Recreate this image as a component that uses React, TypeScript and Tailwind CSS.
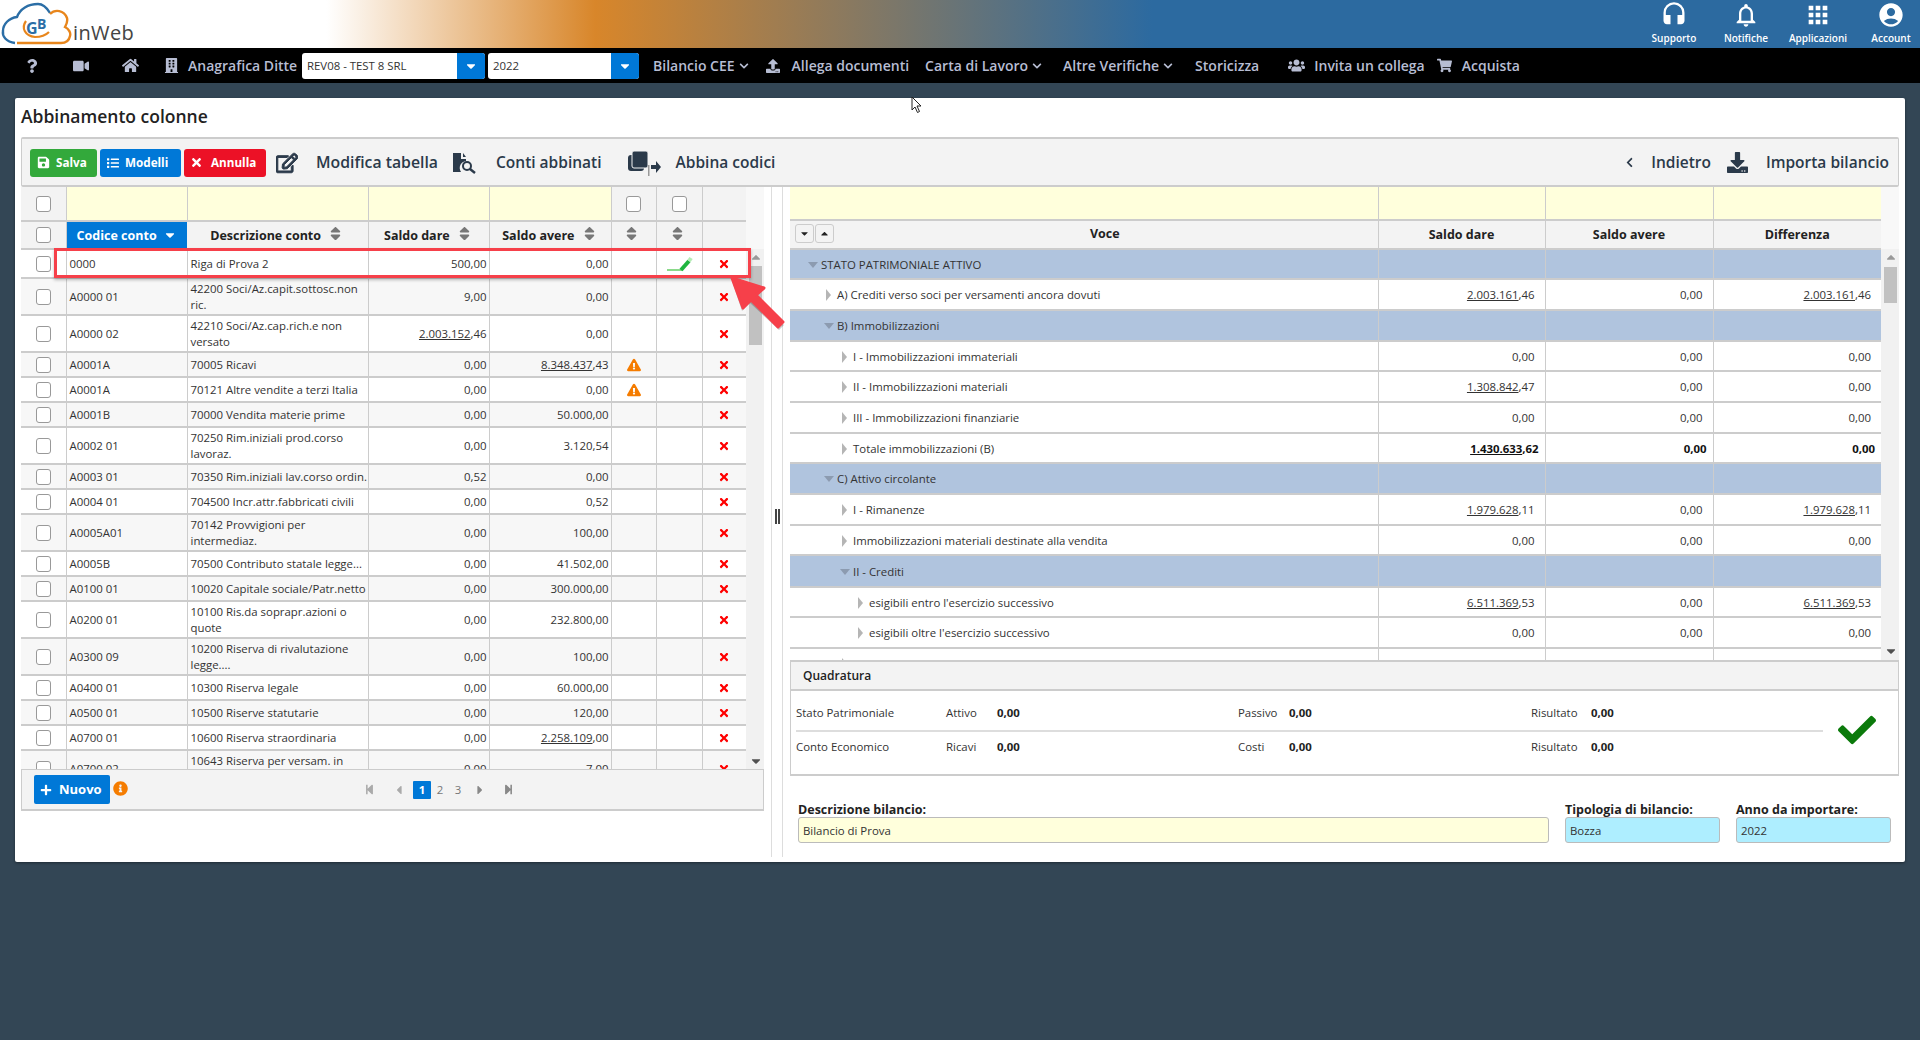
import React from "react";
import {
  FaSave, FaList, FaTimes, FaRegEdit, FaQuestion, FaVideo, FaHome, FaBuilding, FaUpload,
  FaChevronDown, FaChevronLeft, FaUsers, FaShoppingCart, FaCheck, FaCaretDown, FaCaretUp, FaSort,
  FaExclamationTriangle, FaPlus, FaInfoCircle, FaStepBackward, FaStepForward, FaCaretLeft, FaCaretRight, FaDownload,
} from "react-icons/fa";
import { MdHeadset, MdNotificationsNone, MdApps, MdAccountCircle } from "react-icons/md";

const Box = () => <span className="block h-4 w-[15px] rounded-[3px] border border-[#999] bg-white mx-auto" />;

const Sort = ({ solo }: { solo?: boolean }) => (
  <FaSort className={(solo ? "mr-[4px] " : "ml-[3px] ") + "inline-block text-[#777] text-[17px] align-[-2px]"} />
);

const Num = ({ u, r }: { u: string; r: string }) => (
  <span>
    <span className="underline">{u}</span>
    {r}
  </span>
);

const parseNum = (v: string) => {
  if (v.startsWith("_")) {
    const [a, b] = v.slice(1).split(",");
    return <Num u={a} r={"," + b} />;
  }
  return v;
};

const leftRows: { c: string; d: React.ReactNode; a: string; b: string; h: string; w?: boolean; p?: boolean }[] = [
  { c: "0000", d: "Riga di Prova 2", a: "500,00", b: "0,00", h: "h-[29px]", p: true },
  { c: "A0000 01", d: <>42200 Soci/Az.capit.sottosc.non<br />ric.</>, a: "9,00", b: "0,00", h: "h-[37px]" },
  { c: "A0000 02", d: <>42210 Soci/Az.cap.rich.e non<br />versato</>, a: "_2.003.152,46", b: "0,00", h: "h-[37px]" },
  { c: "A0001A", d: "70005 Ricavi", a: "0,00", b: "_8.348.437,43", h: "h-[25px]", w: true },
  { c: "A0001A", d: "70121 Altre vendite a terzi Italia", a: "0,00", b: "0,00", h: "h-[25px]", w: true },
  { c: "A0001B", d: "70000 Vendita materie prime", a: "0,00", b: "50.000,00", h: "h-[25px]" },
  { c: "A0002 01", d: <>70250 Rim.iniziali prod.corso<br />lavoraz.</>, a: "0,00", b: "3.120,54", h: "h-[37px]" },
  { c: "A0003 01", d: "70350 Rim.iniziali lav.corso ordin.", a: "0,52", b: "0,00", h: "h-[25px]" },
  { c: "A0004 01", d: "704500 Incr.attr.fabbricati civili", a: "0,00", b: "0,52", h: "h-[25px]" },
  { c: "A0005A01", d: <>70142 Provvigioni per<br />intermediaz.</>, a: "0,00", b: "100,00", h: "h-[37px]" },
  { c: "A0005B", d: "70500 Contributo statale legge...", a: "0,00", b: "41.502,00", h: "h-[25px]" },
  { c: "A0100 01", d: "10020 Capitale sociale/Patr.netto", a: "0,00", b: "300.000,00", h: "h-[25px]" },
  { c: "A0200 01", d: <>10100 Ris.da soprapr.azioni o<br />quote</>, a: "0,00", b: "232.800,00", h: "h-[37px]" },
  { c: "A0300 09", d: <>10200 Riserva di rivalutazione<br />legge....</>, a: "0,00", b: "100,00", h: "h-[37px]" },
  { c: "A0400 01", d: "10300 Riserva legale", a: "0,00", b: "60.000,00", h: "h-[25px]" },
  { c: "A0500 01", d: "10500 Riserve statutarie", a: "0,00", b: "120,00", h: "h-[25px]" },
  { c: "A0700 01", d: "10600 Riserva straordinaria", a: "0,00", b: "_2.258.109,00", h: "h-[25px]" },
  { c: "A0700 02", d: <>10643 Riserva per versam. in<br />c/capitale</>, a: "0,00", b: "7,00", h: "h-[37px]" },
];

const rightRows: { t: string; l: string; g?: boolean; a: string; b: string; c: string; bold?: boolean; h: string }[] = [
  { t: "STATO PATRIMONIALE ATTIVO", l: "pl-[31px]", g: true, a: "", b: "", c: "", h: "h-[30px]" },
  { t: "A) Crediti verso soci per versamenti ancora dovuti", l: "pl-[47px]", a: "_2.003.161,46", b: "0,00", c: "_2.003.161,46", h: "h-[31px]" },
  { t: "B) Immobilizzazioni", l: "pl-[47px]", g: true, a: "", b: "", c: "", h: "h-[31px]" },
  { t: "I - Immobilizzazioni immateriali", l: "pl-[63px]", a: "0,00", b: "0,00", c: "0,00", h: "h-[30px]" },
  { t: "II - Immobilizzazioni materiali", l: "pl-[63px]", a: "_1.308.842,47", b: "0,00", c: "0,00", h: "h-[31px]" },
  { t: "III - Immobilizzazioni finanziarie", l: "pl-[63px]", a: "0,00", b: "0,00", c: "0,00", h: "h-[31px]" },
  { t: "Totale immobilizzazioni (B)", l: "pl-[63px]", a: "_1.430.633,62", b: "0,00", c: "0,00", bold: true, h: "h-[30px]" },
  { t: "C) Attivo circolante", l: "pl-[47px]", g: true, a: "", b: "", c: "", h: "h-[31px]" },
  { t: "I - Rimanenze", l: "pl-[63px]", a: "_1.979.628,11", b: "0,00", c: "_1.979.628,11", h: "h-[31px]" },
  { t: "Immobilizzazioni materiali destinate alla vendita", l: "pl-[63px]", a: "0,00", b: "0,00", c: "0,00", h: "h-[30px]" },
  { t: "II - Crediti", l: "pl-[63px]", g: true, a: "", b: "", c: "", h: "h-[32px]" },
  { t: "esigibili entro l'esercizio successivo", l: "pl-[79px]", a: "_6.511.369,53", b: "0,00", c: "_6.511.369,53", h: "h-[30px]" },
  { t: "esigibili oltre l'esercizio successivo", l: "pl-[79px]", a: "0,00", b: "0,00", c: "0,00", h: "h-[31px]" },
  { t: "Immobilizzazioni", l: "pl-[63px]", a: "0,00", b: "0,00", c: "0,00", h: "h-[31px]" },
];

const NavText = ({ children, cls }: { children: React.ReactNode; cls: string }) => (
  <span className={"whitespace-nowrap text-[14px] font-semibold " + cls}>{children}</span>
);

const Select = ({ v, cls }: { v: string; cls: string }) => (
  <div className={"flex h-[26px] items-stretch overflow-hidden rounded-[3px] bg-white " + cls}>
    <span className="flex-1 pl-[5px] text-[11.4px] leading-[26px] text-[#333]">{v}</span>
    <span className="flex w-[28px] items-center justify-center bg-[#0078d7] text-white">
      <FaCaretDown className="text-[14px]" />
    </span>
  </div>
);

const TopIcon = ({ icon, label, cls }: { icon: React.ReactNode; label: string; cls: string }) => (
  <div className={"flex flex-col items-center text-white " + cls}>
    <span className="flex h-[26px] items-center text-[28px]">{icon}</span>
    <span className="mt-[3px] whitespace-nowrap text-[10px] font-semibold leading-[14px]">{label}</span>
  </div>
);

const ToolBtn = ({ cls, icon, label }: { cls: string; icon: React.ReactNode; label: string }) => (
  <button className={"flex h-[28px] items-center rounded-[3px] text-[11.7px] font-bold text-white " + cls}>
    {icon}
    {label}
  </button>
);

export default function App() {
  return (
    <div className="relative h-[1040px] w-[1920px] overflow-hidden bg-[#334655] font-['Open_Sans',sans-serif] text-[11.4px] text-[#333]">
      {/* top band */}
      <header className="flex h-12 items-start justify-between bg-[linear-gradient(90deg,#ffffff_17%,#d8862a_31%,#2c6aa0_60%)]">
        <div className="flex items-end">
          <svg viewBox="0 0 72 46" className="h-[46px] w-[72px]">
            <path d="M15 43 C6 42 2 36 3 31 C3 24 9 18 17 17 C20 9 28 4 38 4 C43 4 47 8 50 13" fill="none" stroke="#2b6ea6" strokeWidth="2.4" />
            <path d="M50 14 C55 9 64 10 67 18 C68 22 66 25 65 27 C69 29 71 33 70 36 C69 41 65 43 61 43 L17 43" fill="none" stroke="#e8861c" strokeWidth="2.4" />
            <path d="M26 21 C21 28 25 36 35 37 C41 37 46 35 49 32" fill="none" stroke="#e8861c" strokeWidth="2.2" />
            <text x="26" y="34" fontSize="16" fontWeight="700" fill="#2b6ea6" fontFamily="Open Sans">G</text>
            <text x="37" y="29" fontSize="14" fontWeight="700" fill="#2b6ea6" fontFamily="Open Sans">B</text>
          </svg>
          <span className="ml-[1px] text-[20px] font-normal leading-[27px] tracking-[0.4px] text-[#444]">inWeb</span>
        </div>
        <div className="flex pt-[2px]">
          <TopIcon cls="w-[72px]" icon={<MdHeadset />} label="Supporto" />
          <TopIcon cls="w-[72px]" icon={<MdNotificationsNone />} label="Notifiche" />
          <TopIcon cls="w-[72px] mr-[8px]" icon={<MdApps />} label="Applicazioni" />
          <TopIcon cls="w-[58px]" icon={<MdAccountCircle />} label="Account" />
        </div>
      </header>

      {/* nav */}
      <nav className="flex h-[35px] items-center bg-black text-[#b7bdd3]">
        <FaQuestion className="ml-[25px] text-[14px]" />
        <FaVideo className="ml-[34px] text-[16px]" />
        <FaHome className="ml-[33px] text-[17px]" />
        <FaBuilding className="ml-[25px] text-[15px]" />
        <NavText cls="ml-[9px] w-[114px]">Anagrafica Ditte</NavText>
        <Select v="REV08 - TEST 8 SRL" cls="w-[183px]" />
        <Select v="2022" cls="ml-[3px] w-[151px]" />
        <NavText cls="ml-[14px]">Bilancio CEE</NavText>
        <FaChevronDown className="ml-[4px] text-[10px]" />
        <FaUpload className="ml-[17px] text-[14px]" />
        <NavText cls="ml-[12px]">Allega documenti</NavText>
        <NavText cls="ml-[16px]">Carta di Lavoro</NavText>
        <FaChevronDown className="ml-[4px] text-[10px]" />
        <NavText cls="ml-[21px]">Altre Verifiche</NavText>
        <FaChevronDown className="ml-[4px] text-[10px]" />
        <NavText cls="ml-[22px]">Storicizza</NavText>
        <FaUsers className="ml-[29px] text-[17px]" />
        <NavText cls="ml-[9px]">Invita un collega</NavText>
        <FaShoppingCart className="ml-[12px] text-[15px]" />
        <NavText cls="ml-[10px]">Acquista</NavText>
      </nav>

      {/* card */}
      <main className="mx-[15px] mt-[15px] h-[764px] rounded-[2px] bg-white px-[6px] shadow-[0_1px_3px_rgba(0,0,0,0.4)]">
        <h1 className="flex h-[39px] items-center pb-[2px] text-[17.5px] font-semibold text-[#222]">Abbinamento colonne</h1>

        <div className="flex h-[50px] items-center justify-between rounded-[2px] border-y-2 border-x border-[#ccc] bg-[#f3f3f3] pt-[1px] text-[#2b3a4a]">
          <div className="flex items-center">
            <ToolBtn cls="ml-[8px] w-[67px] bg-[#33a93b] pl-[7px]" icon={<FaSave className="mr-[6px] text-[13px]" />} label="Salva" />
            <ToolBtn cls="ml-[3px] w-[81px] bg-[#0078d7] pl-[7px]" icon={<FaList className="mr-[6px] text-[12px]" />} label="Modelli" />
            <ToolBtn cls="ml-[3px] w-[82px] bg-[#ec1126] pl-[6px]" icon={<FaTimes className="mr-[8px] text-[13px]" />} label="Annulla" />
            <FaRegEdit className="ml-[10px] stroke-[25] text-[22px]" />
            <span className="ml-[18px] text-[15.8px] font-semibold">Modifica tabella</span>
            <svg viewBox="0 0 24 22" className="ml-[14px] h-[22px] w-[24px]" fill="#2b3a4a">
              <path d="M1 1 H9 V7 H14 V9 A7 7 0 0 0 9 20 H1 Z" />
              <path d="M11 1 L14 5 H11 Z" />
              <circle cx="15" cy="14" r="4" fill="none" stroke="#2b3a4a" strokeWidth="2" />
              <path d="M18 17 L23 21" stroke="#2b3a4a" strokeWidth="2.5" />
            </svg>
            <span className="ml-[20px] text-[15.5px] font-semibold">Conti abbinati</span>
            <svg viewBox="0 0 34 26" className="ml-[25px] h-[26px] w-[34px]" fill="#2b3a4a">
              <rect x="1" y="5" width="16" height="16" rx="3" />
              <rect x="5" y="1" width="16" height="17" rx="2" stroke="#f3f3f3" strokeWidth="1" />
              <rect x="21" y="15" width="1.5" height="11" fill="#999" />
              <path d="M24 15 H29 V11 L34 17 L29 23 V19 H24 Z" />
            </svg>
            <span className="ml-[15px] text-[15.5px] font-semibold">Abbina codici</span>
          </div>
          <div className="flex items-center pr-[9px]">
            <FaChevronLeft className="text-[11px]" />
            <span className="ml-[16px] text-[15.5px] font-semibold">Indietro</span>
            <FaDownload className="ml-[16px] text-[21px]" />
            <span className="ml-[18px] text-[15.5px] font-semibold">Importa bilancio</span>
          </div>
        </div>

        <div className="flex">
          {/* left */}
          <section className="w-[743px]">
            <div className="flex h-[582px] overflow-hidden">
              <div className="w-[725px]">
                <table className="w-[725px] table-fixed border-collapse">
                  <colgroup>
                    <col className="w-[45px]" /><col className="w-[121px]" /><col className="w-[181px]" /><col className="w-[121px]" />
                    <col className="w-[122px]" /><col className="w-[45px]" /><col className="w-[46px]" /><col className="w-[44px]" />
                  </colgroup>
                  <thead>
                    <tr className="h-[34px]">
                      <th className="border-b-2 border-r border-[#ccc] bg-[#f3f3f3]"><Box /></th>
                      <th className="border-b-2 border-r border-[#ccc] bg-[#ffffdc]" />
                      <th className="border-b-2 border-r border-[#ccc] bg-[#ffffdc]" />
                      <th className="border-b-2 border-r border-[#ccc] bg-[#ffffdc]" />
                      <th className="border-b-2 border-r border-[#ccc] bg-[#ffffdc]" />
                      <th className="border-b-2 border-r border-[#ccc] bg-[#f3f3f3]"><Box /></th>
                      <th className="border-b-2 border-r border-[#ccc] bg-[#f3f3f3]"><Box /></th>
                      <th className="border-b-2 border-[#ccc] bg-[#f3f3f3]" />
                    </tr>
                    <tr className="h-[28px] text-[12.5px] font-semibold text-[#222]">
                      <th className="border-b-2 border-r border-[#ccc] bg-[#f3f3f3]"><Box /></th>
                      <th className="bg-[#0078d7] pt-[1px] font-bold text-white">Codice conto <FaCaretDown className="ml-[3px] inline-block text-[14px] align-[-2px]" /></th>
                      <th className="border-b-2 border-r border-[#ccc] bg-[#f3f3f3] pt-[1px]">Descrizione conto <Sort /></th>
                      <th className="border-b-2 border-r border-[#ccc] bg-[#f3f3f3] pt-[1px]">Saldo dare <Sort /></th>
                      <th className="border-b-2 border-r border-[#ccc] bg-[#f3f3f3] pt-[1px]">Saldo avere <Sort /></th>
                      <th className="border-b-2 border-r border-[#ccc] bg-[#f3f3f3]"><Sort solo /></th>
                      <th className="border-b-2 border-r border-[#ccc] bg-[#f3f3f3]"><Sort solo /></th>
                      <th className="border-b-2 border-[#ccc] bg-[#f3f3f3]" />
                    </tr>
                  </thead>
                  <tbody>
                    {leftRows.map((r, i) => (
                      <tr key={i} className={r.h + (i % 2 ? " bg-[#f7f7f7]" : " bg-white")}>
                        <td className="border-b-2 border-r border-[#ccc]"><Box /></td>
                        <td className="border-b-2 border-r border-[#ccc] pl-[3px] pt-[1px]">{r.c}</td>
                        <td className="border-b-2 border-r border-[#ccc] pl-[3px] pt-[1px] leading-[16px] whitespace-nowrap overflow-hidden">{r.d}</td>
                        <td className="border-b-2 border-r border-[#ccc] pr-[2px] pt-[1px] text-right">{parseNum(r.a)}</td>
                        <td className="border-b-2 border-r border-[#ccc] pr-[2px] pt-[1px] text-right">{parseNum(r.b)}</td>
                        <td className="border-b-2 border-r border-[#ccc] pl-[15px]">
                          {r.w && <FaExclamationTriangle className="text-[14px] text-[#f57c00]" />}
                        </td>
                        <td className="border-b-2 border-r border-[#ccc] text-center">
                          {r.p && (
                            <svg viewBox="0 0 28 16" className="mx-auto h-[16px] w-[28px]">
                              <path d="M2 14 H17" stroke="#3cc13c" strokeWidth="1.2" />
                              <path d="M16 14 L24 5" stroke="#1fb53f" strokeWidth="4" />
                              <path d="M24 5 L26 2" stroke="#b5ecb5" strokeWidth="4" />
                            </svg>
                          )}
                        </td>
                        <td className="border-b-2 border-[#ccc]"><FaTimes className="mx-auto text-[12px] text-[#f00]" /></td>
                      </tr>
                    ))}
                  </tbody>
                </table>
              </div>
              <div className="flex w-[18px] flex-col">
                <div className="h-[62px] bg-[#f8f8f8]" />
                <div className="flex flex-1 flex-col items-center bg-[#f1f1f1] pl-[1px]">
                  <FaCaretUp className="mt-[1px] h-[14px] text-[10px] text-[#999]" />
                  <div className="mt-[2px] h-[79px] w-[13px] bg-[#c1c1c1]" />
                  <div className="flex-1" />
                  <FaCaretDown className="mb-[1px] h-[14px] text-[10px] text-[#505050]" />
                </div>
              </div>
            </div>
            <footer className="relative flex h-[42px] items-center border-y border-x border-[#ccc] bg-[#f3f3f3] border-b-2">
              <button className="ml-[12px] flex h-[29px] w-[76px] items-center rounded-[2px] bg-[#0078d7] pl-[6px] text-[13px] font-bold text-white">
                <FaPlus className="mr-[7px] text-[12px]" />Nuovo
              </button>
              <FaInfoCircle className="ml-[3px] mb-[2px] text-[15px] text-[#f57c00]" />
              <div className="ml-[236px] flex items-center text-[#aaa]">
                <FaStepBackward className="text-[11px]" />
                <FaCaretLeft className="ml-[17px] text-[14px]" />
                <span className="ml-[7px] flex h-[18px] w-[18px] items-center justify-center rounded-[1px] bg-[#0078d7] font-bold text-white">1</span>
                <span className="ml-[2px] w-[14px] text-center text-[#777]">2</span>
                <span className="ml-[4px] w-[14px] text-center text-[#777]">3</span>
                <FaCaretRight className="ml-[8px] text-[14px] text-[#888]" />
                <FaStepForward className="ml-[16px] text-[11px] text-[#888]" />
              </div>
            </footer>
          </section>

          {/* splitter */}
          <div className="mx-[7px] flex h-[670px] w-[12px] items-center justify-center border-x border-[#dddddd] pb-[12px]">
            <div className="h-[15px] w-[5px] border-x-2 border-[#444]" />
          </div>

          {/* right */}
          <section className="w-[1109px]">
            <div className="flex h-[473px] overflow-hidden">
              <div className="w-[1091px]">
                <table className="w-[1091px] table-fixed border-collapse">
                  <colgroup>
                    <col className="w-[588px]" /><col className="w-[167px]" /><col className="w-[168px]" /><col className="w-[168px]" />
                  </colgroup>
                  <thead>
                    <tr className="h-[33px] bg-[#ffffdc]">
                      <th className="border-b-2 border-r border-[#ccc]" />
                      <th className="border-b-2 border-r border-[#ccc]" />
                      <th className="border-b-2 border-r border-[#ccc]" />
                      <th className="border-b-2 border-[#ccc]" />
                    </tr>
                    <tr className="h-[29px] bg-[#f3f3f3] text-[12.5px] font-semibold text-[#222]">
                      <th className="border-b-2 border-r border-[#ccc] pl-[42px]">
                        <div className="relative">
                          <span className="absolute left-[-37px] top-[-1px] flex">
                            <span className="flex h-[19px] w-[19px] items-center justify-center rounded-[3px] border border-[#ccc] bg-[#f3f3f3]"><FaCaretDown className="text-[11px]" /></span>
                            <span className="ml-[1px] flex h-[19px] w-[19px] items-center justify-center rounded-[3px] border border-[#ccc] bg-[#f3f3f3]"><FaCaretUp className="text-[11px]" /></span>
                          </span>
                          Voce
                        </div>
                      </th>
                      <th className="border-b-2 border-r border-[#ccc] pt-[1px]">Saldo dare</th>
                      <th className="border-b-2 border-r border-[#ccc] pt-[1px]">Saldo avere</th>
                      <th className="border-b-2 border-[#ccc] pt-[1px]">Differenza</th>
                    </tr>
                  </thead>
                  <tbody>
                    {rightRows.map((r, i) => (
                      <tr key={i} className={r.h + (r.g ? " bg-[#b0c4de]" : " bg-white")}>
                        <td className={"border-b-2 border-r border-[#ccc] pt-[1px] " + r.l}>
                          <span className="relative">
                            <span className={r.g
                              ? "absolute left-[-13px] top-[5px] h-0 w-0 border-x-[5px] border-t-[6px] border-x-transparent border-t-[#8c9bb0]"
                              : "absolute left-[-11px] top-[2px] h-0 w-0 border-y-[6px] border-l-[5px] border-y-transparent border-l-[#b5b5b5]"} />
                            {r.t}
                          </span>
                        </td>
                        <td className={"border-b-2 border-r border-[#ccc] pt-[1px] text-right " + (r.bold ? "pr-[6px] font-bold text-[#111]" : "pr-[10px]")}>{parseNum(r.a)}</td>
                        <td className={"border-b-2 border-r border-[#ccc] pt-[1px] text-right " + (r.bold ? "pr-[6px] font-bold text-[#111]" : "pr-[10px]")}>{parseNum(r.b)}</td>
                        <td className={"border-b-2 border-[#ccc] pt-[1px] text-right " + (r.bold ? "pr-[6px] font-bold text-[#111]" : "pr-[10px]")}>{parseNum(r.c)}</td>
                      </tr>
                    ))}
                  </tbody>
                </table>
              </div>
              <div className="flex w-[18px] flex-col">
                <div className="h-[62px] bg-[#f8f8f8]" />
                <div className="flex flex-1 flex-col items-center bg-[#f1f1f1] pl-[1px]">
                  <FaCaretUp className="mt-[1px] h-[14px] text-[10px] text-[#999]" />
                  <div className="mt-[3px] h-[36px] w-[13px] bg-[#c1c1c1]" />
                  <div className="flex-1" />
                  <FaCaretDown className="mb-[2px] h-[14px] text-[10px] text-[#505050]" />
                </div>
              </div>
            </div>

            <div className="h-[116px] border-2 border-[#ccc] border-x-[1px] bg-white">
              <div className="flex h-[29px] items-center border-b-2 border-[#ccc] bg-[#f3f3f3] pl-[12px] text-[12px] font-semibold text-[#222]">Quadratura</div>
              <div className="flex items-center">
                <div className="ml-[5px] w-[1027px] pt-[5px]">
                  <div className="flex h-[36px] items-center border-b-2 border-[#ddd]">
                    <span className="w-[150px]">Stato Patrimoniale</span>
                    <span className="w-[51px]">Attivo</span>
                    <b className="w-[241px] text-[#222]">0,00</b>
                    <span className="w-[51px]">Passivo</span>
                    <b className="w-[242px] text-[#222]">0,00</b>
                    <span className="w-[60px]">Risultato</span>
                    <b className="text-[#222]">0,00</b>
                  </div>
                  <div className="flex h-[30px] items-center">
                    <span className="w-[150px]">Conto Economico</span>
                    <span className="w-[51px]">Ricavi</span>
                    <b className="w-[241px] text-[#222]">0,00</b>
                    <span className="w-[51px]">Costi</span>
                    <b className="w-[242px] text-[#222]">0,00</b>
                    <span className="w-[60px]">Risultato</span>
                    <b className="text-[#222]">0,00</b>
                  </div>
                </div>
                <FaCheck className="ml-[15px] mt-[6px] text-[38px] text-[#0b7a0b]" />
              </div>
            </div>

            <div className="mt-[27px] flex px-[8px] text-[12.5px] font-bold text-[#222]">
              <label className="block w-[751px] leading-[14px]">
                Descrizione bilancio:
                <input readOnly value="Bilancio di Prova" className="mt-0 block h-[26px] w-full rounded-[3px] border border-[#bbb] bg-[#ffffdc] px-[4px] text-[11.4px] font-normal text-[#333]" />
              </label>
              <label className="ml-[16px] block w-[155px] leading-[14px]">
                Tipologia di bilancio:
                <input readOnly value="Bozza" className="block h-[26px] w-full rounded-[3px] border border-[#bbb] bg-[#aeeeff] px-[4px] text-[11.4px] font-normal text-[#333]" />
              </label>
              <label className="ml-[16px] block w-[155px] leading-[14px]">
                Anno da importare:
                <input readOnly value="2022" className="block h-[26px] w-full rounded-[3px] border border-[#bbb] bg-[#aeeeff] px-[4px] text-[11.4px] font-normal text-[#333]" />
              </label>
            </div>
          </section>
        </div>
      </main>

      {/* red annotation drawn on the screenshot */}
      <div className="absolute left-[54px] top-[248px] h-[30px] w-[697px] border-[3px] border-[#f6404a] shadow-[0_2px_3px_rgba(0,0,0,0.25)]" />
      <svg className="absolute left-[725px] top-[270px] h-[70px] w-[70px]" viewBox="0 0 70 70">
        <path d="M8 9 L39 18 L31 25 L60 53 L55 58 L26 31 L18 39 Z" fill="#000" opacity="0.2" transform="translate(-1 2)" />
        <path d="M7 8 L39 18 L31 25 L58 52 L53 57 L26 30 L18 38 Z" fill="#f6404a" stroke="#f6404a" strokeWidth="3" strokeLinejoin="round" />
      </svg>
      {/* mouse pointer */}
      <svg className="absolute left-[911px] top-[96px] h-[18px] w-[12px]" viewBox="0 0 12 18">
        <path d="M1 1 V14 L4 11 L6.5 16.5 L8.5 15.5 L6 10 H10 Z" fill="#fff" stroke="#222" strokeWidth="1" />
      </svg>
    </div>
  );
}
